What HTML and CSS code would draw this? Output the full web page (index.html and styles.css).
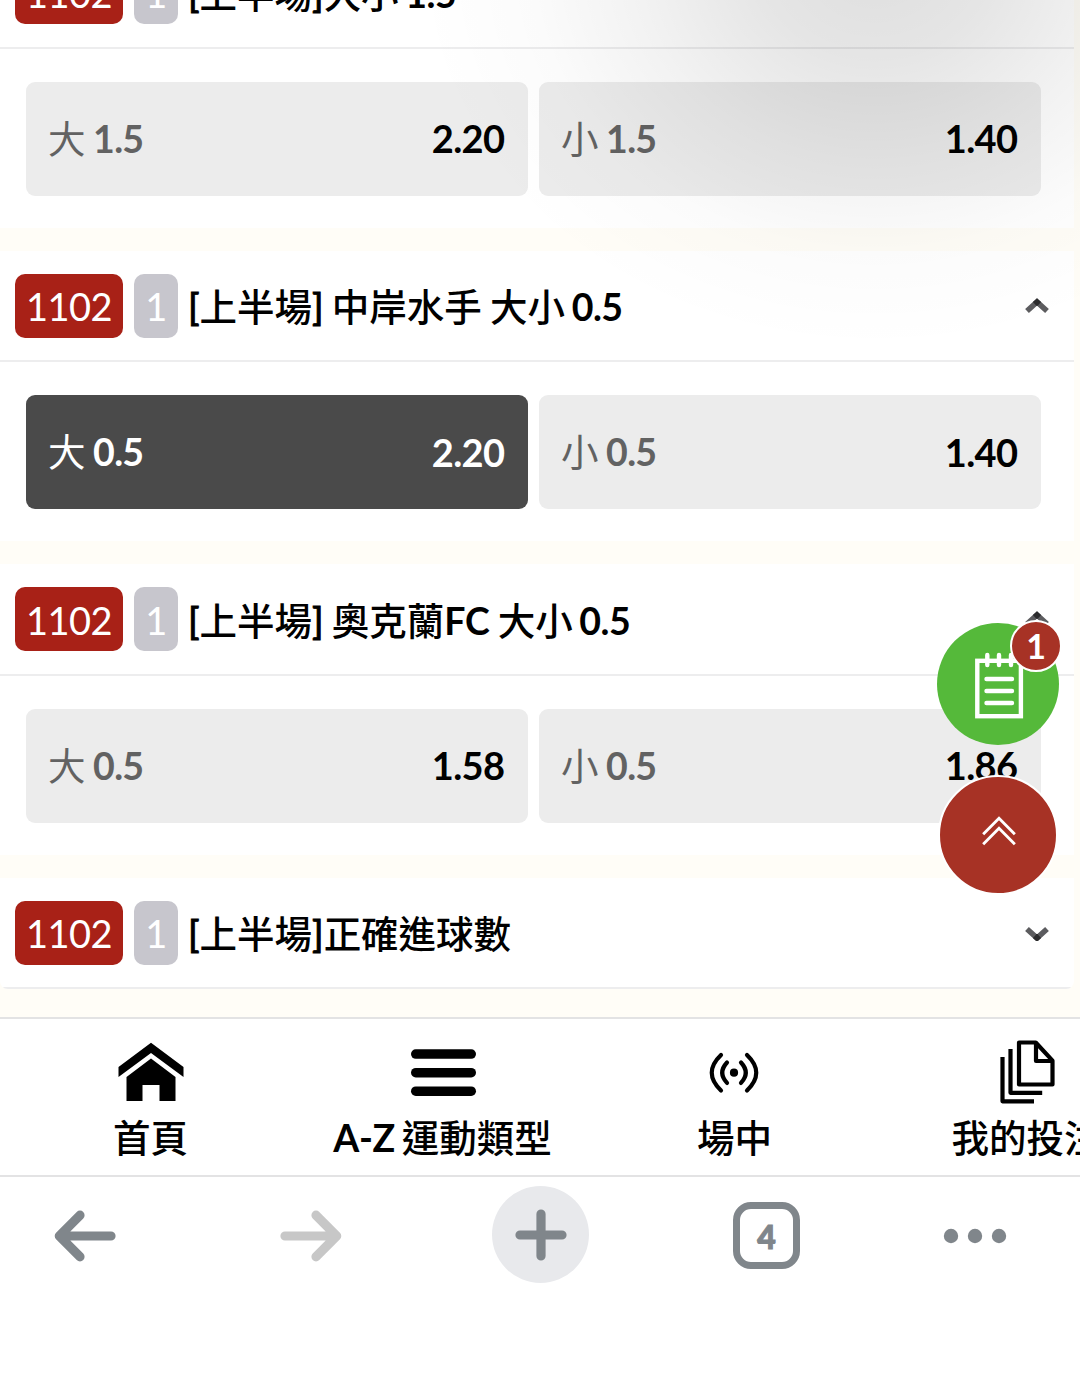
FILE: index.html
```html
<!DOCTYPE html>
<html lang="zh-Hant">
<head>
<meta charset="utf-8">
<title>上半場 大小</title>
<link rel="stylesheet" href="styles.css">
</head>
<body>
<div class="screen">
  <main class="markets">
    <section class="market">
      <header class="market-head">
        <span class="code">1102</span><span class="count">1</span>
        <h2 class="title"><i>[</i>上半場<i>]</i>大小 <b>1.5</b></h2>
      </header>
      <div class="options">
        <div class="option"><span class="name">大 <b>1.5</b></span><span class="odds">2.20</span></div>
        <div class="option"><span class="name">小 <b>1.5</b></span><span class="odds">1.40</span></div>
      </div>
    </section>
    <section class="market">
      <header class="market-head">
        <span class="code">1102</span><span class="count">1</span>
        <h2 class="title"><i>[</i>上半場<i>]</i> 中岸水手 大小 <b>0.5</b></h2>
        <svg class="chevron" viewBox="0 0 24 16"><path d="M2 13 12 4 22 13"/><path class="tip" d="M9.8 6 12 4 14.2 6"/></svg>
      </header>
      <div class="options">
        <div class="option selected"><span class="name">大 <b>0.5</b></span><span class="odds">2.20</span></div>
        <div class="option"><span class="name">小 <b>0.5</b></span><span class="odds">1.40</span></div>
      </div>
    </section>
    <section class="market">
      <header class="market-head">
        <span class="code">1102</span><span class="count">1</span>
        <h2 class="title"><i>[</i>上半場<i>]</i> 奧克蘭<b class="latin">FC</b> 大小 <b>0.5</b></h2>
        <svg class="chevron" viewBox="0 0 24 16"><path d="M2 13 12 4 22 13"/><path class="tip" d="M9.8 6 12 4 14.2 6"/></svg>
      </header>
      <div class="options">
        <div class="option"><span class="name">大 <b>0.5</b></span><span class="odds">1.58</span></div>
        <div class="option"><span class="name">小 <b>0.5</b></span><span class="odds">1.86</span></div>
      </div>
    </section>
    <section class="market collapsed">
      <header class="market-head">
        <span class="code">1102</span><span class="count">1</span>
        <h2 class="title"><i>[</i>上半場<i>]</i>正確進球數</h2>
        <svg class="chevron" viewBox="0 0 24 16"><path d="M2 4 12 13 22 4"/><path class="tip" d="M9.8 11 12 13 14.2 11"/></svg>
      </header>
    </section>
    <div class="shade"></div>
  </main>

  <nav class="site-nav">
    <a class="nav-item">
      <svg class="nav-icon" viewBox="0 0 70 70"><path d="M35 5.7 67.5 30V40L35 16 2.500 40V30Z"/><path d="M35 21.500 59.500 40V64H43.500V48H26.500V64H10.500V40Z"/></svg>
      <span>首頁</span>
    </a>
    <a class="nav-item">
      <svg class="nav-icon" viewBox="0 0 70 70"><rect x="3" y="12.300" width="65" height="9.500" rx="4.750"/><rect x="3" y="30.900" width="65" height="9.500" rx="4.750"/><rect x="3" y="49.400" width="65" height="9.500" rx="4.750"/></svg>
      <span class="sports"><b class="latin">A-Z</b> 運動類型</span>
    </a>
    <a class="nav-item">
      <svg class="nav-icon" viewBox="0 0 70 70"><circle cx="34" cy="35.700" r="4.100"/><g class="line"><path d="M27 25.500Q17.500 35.700 27 45.900M41 25.500Q50.500 35.700 41 45.900M21 18Q2.500 35.700 21 53.500M47 18Q65.500 35.700 47 53.500"/></g></svg>
      <span>場中</span>
    </a>
    <a class="nav-item">
      <svg class="nav-icon" viewBox="0 0 70 70"><g class="line mitre"><path d="M27 5.500H43.700L60.500 23.700V47.500H27ZM44 6V24H60.500"/><path d="M18.500 12V55.800H50.200M10.500 20V64.300H42"/></g></svg>
      <span>我的投注</span>
    </a>
  </nav>

  <footer class="browser-bar">
    <span class="tool"><svg class="back" viewBox="0 0 64 54"><path d="M59 27H8M28 6.200 7.300 27 28 47.800"/></svg></span>
    <span class="tool"><svg class="forward" viewBox="0 0 64 54"><path d="M5 27H56M36 6.200 56.700 27 36 47.800"/></svg></span>
    <span class="tool"><span class="new-tab"><svg viewBox="0 0 54 54"><path d="M27 6V48M6 27H48"/></svg></span></span>
    <span class="tool"><span class="tabs">4</span></span>
    <span class="tool"><svg class="more" viewBox="0 0 64 16"><circle cx="8" cy="8" r="7.200"/><circle cx="32" cy="8" r="7.200"/><circle cx="56" cy="8" r="7.200"/></svg></span>
  </footer>

  <div class="slip">
    <svg viewBox="0 0 122 122"><g><rect x="40.300" y="37.800" width="43.600" height="55.400"/><path d="M50.300 32V42M62 32V42M74 32V42M49.500 56H75M49.500 68H75M49.500 80H75"/></g></svg>
    <span class="slip-count">1</span>
  </div>
  <div class="to-top">
    <svg viewBox="0 0 36 32"><path d="M3 19 18 4 33 19M3 28.500 18 13.500 33 28.500"/></svg>
  </div>
</div>
</body>
</html>
```
FILE: styles.css
```css
* { box-sizing: border-box; }

body {
  margin: 0;
  background: #fff;
  color: #000;
  font-family: Lato, "Noto Sans CJK TC", sans-serif;
  font-size: 37.5px;
  line-height: 1;
}

.screen {
  position: relative;
  width: 1080px;
  height: 1386px;
  overflow: hidden;
  display: flex;
  flex-direction: column;
}

.markets {
  position: relative;
  height: 1017px;
  flex: none;
  overflow: hidden;
  padding-right: 6px;
  background: #fffdf7;
  display: flex;
  flex-direction: column;
  justify-content: flex-end;
  gap: 23px;
  padding-bottom: 28px;
}

.market {
  flex: none;
  height: 290.5px;
  background: #fff;
}

.market.collapsed {
  height: 111.5px;
  border-radius: 0 0 8px 8px;
  overflow: hidden;
}

.market-head {
  height: 111.5px;
  padding: 1px 25.5px 0 15px;
  border-bottom: 2px solid #ededee;
  display: flex;
  align-items: center;
}

.code, .count {
  height: 64px;
  padding-top: 1px;
  border-radius: 10px;
  color: #fff;
  font-size: 38px;
  letter-spacing: -.6px;
  display: flex;
  align-items: center;
  justify-content: center;
}

.code { width: 108px; margin-right: 11px; background: #a82117; }
.count { width: 44px; margin-right: 10px; background: #c7c6cd; }

.title {
  margin: 0;
  padding-top: 2px;
  flex: 1;
  font-size: 37.5px;
  font-weight: 500;
  word-spacing: -1.3px;
  white-space: nowrap;
}

i { font-style: normal; -webkit-text-stroke: .9px #000; }

b {
  margin-left: -2px;
  font-weight: 700;
  letter-spacing: -.7px;
}

.title b { margin-left: -1.5px; letter-spacing: -.5px; }

b.latin, .title b.latin { margin-left: 0; letter-spacing: -.3px; }

.chevron {
  width: 24px;
  height: 16px;
  fill: none;
  stroke: #5c5c5f;
  stroke-width: 5.6;
}

.chevron .tip { stroke: #2b2b2d; }

.options {
  padding: 33px 33px 0 26px;
  display: grid;
  grid-template-columns: 1fr 1fr;
  gap: 11px;
}

.option {
  height: 114px;
  padding: 0 23.5px 0 22px;
  border-radius: 9px;
  background: #ececec;
  display: flex;
  align-items: center;
  justify-content: space-between;
}

.name { color: #626262; }
.odds { padding-bottom: 1px; font-size: 38px; font-weight: 700; letter-spacing: -.6px; }
.selected { background: #4a4a4a; }
.selected .name, .selected .odds { color: #fff; }

.shade {
  position: absolute;
  inset: 0 0 auto 0;
  height: 420px;
  background: radial-gradient(ellipse 460px 390px at 875px -40px, rgba(0, 0, 0, .13), rgba(0, 0, 0, .1) 25%, rgba(0, 0, 0, .05) 52%, rgba(0, 0, 0, .017) 75%, rgba(0, 0, 0, 0));
}

.site-nav {
  flex: none;
  height: 160px;
  padding: 22px 0 0 4.5px;
  border-top: 2px solid #e3e3e4;
  border-bottom: 2px solid #e3e3e4;
  display: grid;
  grid-template-columns: repeat(4, 292px);
}

.nav-item {
  display: flex;
  flex-direction: column;
  align-items: center;
  gap: 12px;
  font-weight: 500;
  white-space: nowrap;
}

.sports { word-spacing: -2.5px; }
.nav-icon { width: 70px; height: 70px; margin-top: -4px; }
.line { fill: none; stroke: #000; stroke-width: 4.2; stroke-linecap: round; }
.mitre { stroke-linecap: butt; stroke-linejoin: round; }

.browser-bar {
  height: 117px;
  display: grid;
  grid-template-columns: 224px 232px 225px 227px 190px;
  margin-left: -28px;
  width: 1098px;
}

.tool {
  display: flex;
  align-items: center;
  justify-content: center;
}

.back, .forward { width: 64px; height: 54px; }

.back, .forward, .new-tab svg {
  fill: none;
  stroke: #80868b;
  stroke-width: 9.2;
  stroke-linecap: round;
  stroke-linejoin: round;
}

.forward { stroke: #c7c7c7; }

.new-tab {
  width: 97px;
  height: 97px;
  margin-top: -2px;
  border-radius: 50%;
  background: #e8e9ec;
  display: flex;
  align-items: center;
  justify-content: center;
}

.new-tab svg { width: 54px; height: 54px; }

.tabs {
  width: 67px;
  height: 67px;
  padding-top: 2px;
  border: 7px solid #80868b;
  border-radius: 18px;
  color: #80868b;
  font-size: 32px;
  font-weight: 900;
  -webkit-text-stroke: 1px #80868b;
  display: flex;
  align-items: center;
  justify-content: center;
}

.more { width: 64px; height: 16px; fill: #80868b; }

.slip {
  position: absolute;
  left: 937px;
  top: 623px;
  width: 122px;
  height: 122px;
  border-radius: 50%;
  background: #55b93a;
}

.slip svg { width: 122px; height: 122px; fill: none; stroke: #fff; stroke-width: 4.4; stroke-linecap: round; }

.slip-count {
  position: absolute;
  left: 73px;
  top: -3px;
  width: 52px;
  height: 52px;
  border: 2.5px solid #fff;
  border-radius: 50%;
  background: #a73225;
  color: #fff;
  font-size: 34px;
  font-weight: 700;
  display: flex;
  align-items: center;
  justify-content: center;
}

.to-top {
  position: absolute;
  left: 938px;
  top: 775px;
  width: 120px;
  height: 120px;
  border: 2px solid #fff;
  border-radius: 50%;
  background: #a73225;
  display: flex;
  align-items: center;
  justify-content: center;
}

.to-top svg { width: 38px; height: 34px; margin: -9px 0 0 2px; fill: none; stroke: #fff; stroke-width: 2.7; }
```
